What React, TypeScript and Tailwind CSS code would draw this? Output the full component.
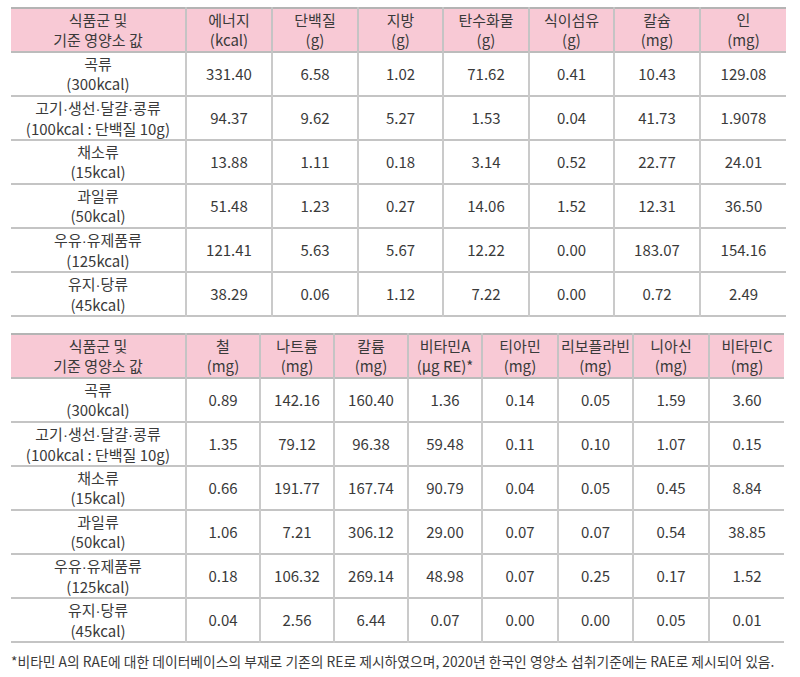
import React from "react";

type Row = { name: string; sub: string; vals: string[] };

const t1Head: [string, string][] = [
  ["에너지", "(kcal)"],
  ["단백질", "(g)"],
  ["지방", "(g)"],
  ["탄수화물", "(g)"],
  ["식이섬유", "(g)"],
  ["칼슘", "(mg)"],
  ["인", "(mg)"],
];

const t2Head: [string, string][] = [
  ["철", "(mg)"],
  ["나트륨", "(mg)"],
  ["칼륨", "(mg)"],
  ["비타민A", "(μg RE)*"],
  ["티아민", "(mg)"],
  ["리보플라빈", "(mg)"],
  ["니아신", "(mg)"],
  ["비타민C", "(mg)"],
];

const names: [string, string][] = [
  ["곡류", "(300kcal)"],
  ["고기·생선·달걀·콩류", "(100kcal : 단백질 10g)"],
  ["채소류", "(15kcal)"],
  ["과일류", "(50kcal)"],
  ["우유·유제품류", "(125kcal)"],
  ["유지·당류", "(45kcal)"],
];

const t1Vals = [
  ["331.40", "6.58", "1.02", "71.62", "0.41", "10.43", "129.08"],
  ["94.37", "9.62", "5.27", "1.53", "0.04", "41.73", "1.9078"],
  ["13.88", "1.11", "0.18", "3.14", "0.52", "22.77", "24.01"],
  ["51.48", "1.23", "0.27", "14.06", "1.52", "12.31", "36.50"],
  ["121.41", "5.63", "5.67", "12.22", "0.00", "183.07", "154.16"],
  ["38.29", "0.06", "1.12", "7.22", "0.00", "0.72", "2.49"],
];

const t2Vals = [
  ["0.89", "142.16", "160.40", "1.36", "0.14", "0.05", "1.59", "3.60"],
  ["1.35", "79.12", "96.38", "59.48", "0.11", "0.10", "1.07", "0.15"],
  ["0.66", "191.77", "167.74", "90.79", "0.04", "0.05", "0.45", "8.84"],
  ["1.06", "7.21", "306.12", "29.00", "0.07", "0.07", "0.54", "38.85"],
  ["0.18", "106.32", "269.14", "48.98", "0.07", "0.25", "0.17", "1.52"],
  ["0.04", "2.56", "6.44", "0.07", "0.00", "0.00", "0.05", "0.01"],
];

function Dotted({ text }: { text: string }) {
  const parts = text.split("·");
  return (
    <>
      {parts.map((p, i) => (
        <React.Fragment key={i}>
          {i > 0 && <span className="font-['Liberation_Sans']">·</span>}
          {p}
        </React.Fragment>
      ))}
    </>
  );
}

function DataTable({
  head,
  vals,
  widths,
  total,
}: {
  head: [string, string][];
  vals: string[][];
  widths: number[];
  total: number;
}) {
  const rows: Row[] = names.map((n, i) => ({ name: n[0], sub: n[1], vals: vals[i] }));
  return (
    <table
      className="table-fixed border-collapse text-[#3a3a3a] text-[15px] leading-[20px]"
      style={{ width: total }}
    >
      <colgroup>
        <col style={{ width: 175 }} />
        {widths.map((w, i) => (
          <col key={i} style={{ width: w }} />
        ))}
      </colgroup>
      <thead>
        <tr className="h-[44px] bg-[#f8c9d5] border-t-2 border-b-2 border-t-[#b4b4b4] border-b-[#bcbcbc]">
          <th className="font-normal text-center p-0 align-middle">
            <div>식품군 및</div>
            <div>기준 영양소 값</div>
          </th>
          {head.map((h, i) => (
            <th
              key={i}
              className="font-normal text-center p-0 align-middle border-l-2 border-l-[#c4c4c4] whitespace-nowrap"
            >
              <div>{h[0]}</div>
              <div>{h[1]}</div>
            </th>
          ))}
        </tr>
      </thead>
      <tbody>
        {rows.map((r, ri) => (
          <tr key={ri} className="h-[44px] border-b-2 border-b-[#c4c4c4]">
            <td className="text-center p-0 align-middle whitespace-nowrap">
              <div>
                <Dotted text={r.name} />
              </div>
              <div>{r.sub}</div>
            </td>
            {r.vals.map((v, vi) => (
              <td
                key={vi}
                className="text-center p-0 align-middle border-l-2 border-l-[#cacaca]"
              >
                {v}
              </td>
            ))}
          </tr>
        ))}
      </tbody>
    </table>
  );
}

export default function App() {
  return (
    <div
      className="w-[800px] h-[677px] bg-white pt-[7px] pl-[11px]"
      style={{ fontFamily: '"Noto Sans CJK KR", "Noto Sans", sans-serif' }}
    >
      <DataTable
        head={t1Head}
        vals={t1Vals}
        widths={[86, 86, 85, 86, 85, 86, 86]}
        total={775}
      />
      <div className="h-[16px]" />
      <DataTable
        head={t2Head}
        vals={t2Vals}
        widths={[74, 74, 74, 74, 76, 75, 76, 75]}
        total={773}
      />
      <p className="mt-[8px] text-[13.8px] leading-[20px] text-[#3a3a3a] whitespace-nowrap">
        *비타민 A의 RAE에 대한 데이터베이스의 부재로 기존의 RE로 제시하였으며, 2020년 한국인 영양소 섭취기준에는 RAE로 제시되어 있음.
      </p>
    </div>
  );
}
